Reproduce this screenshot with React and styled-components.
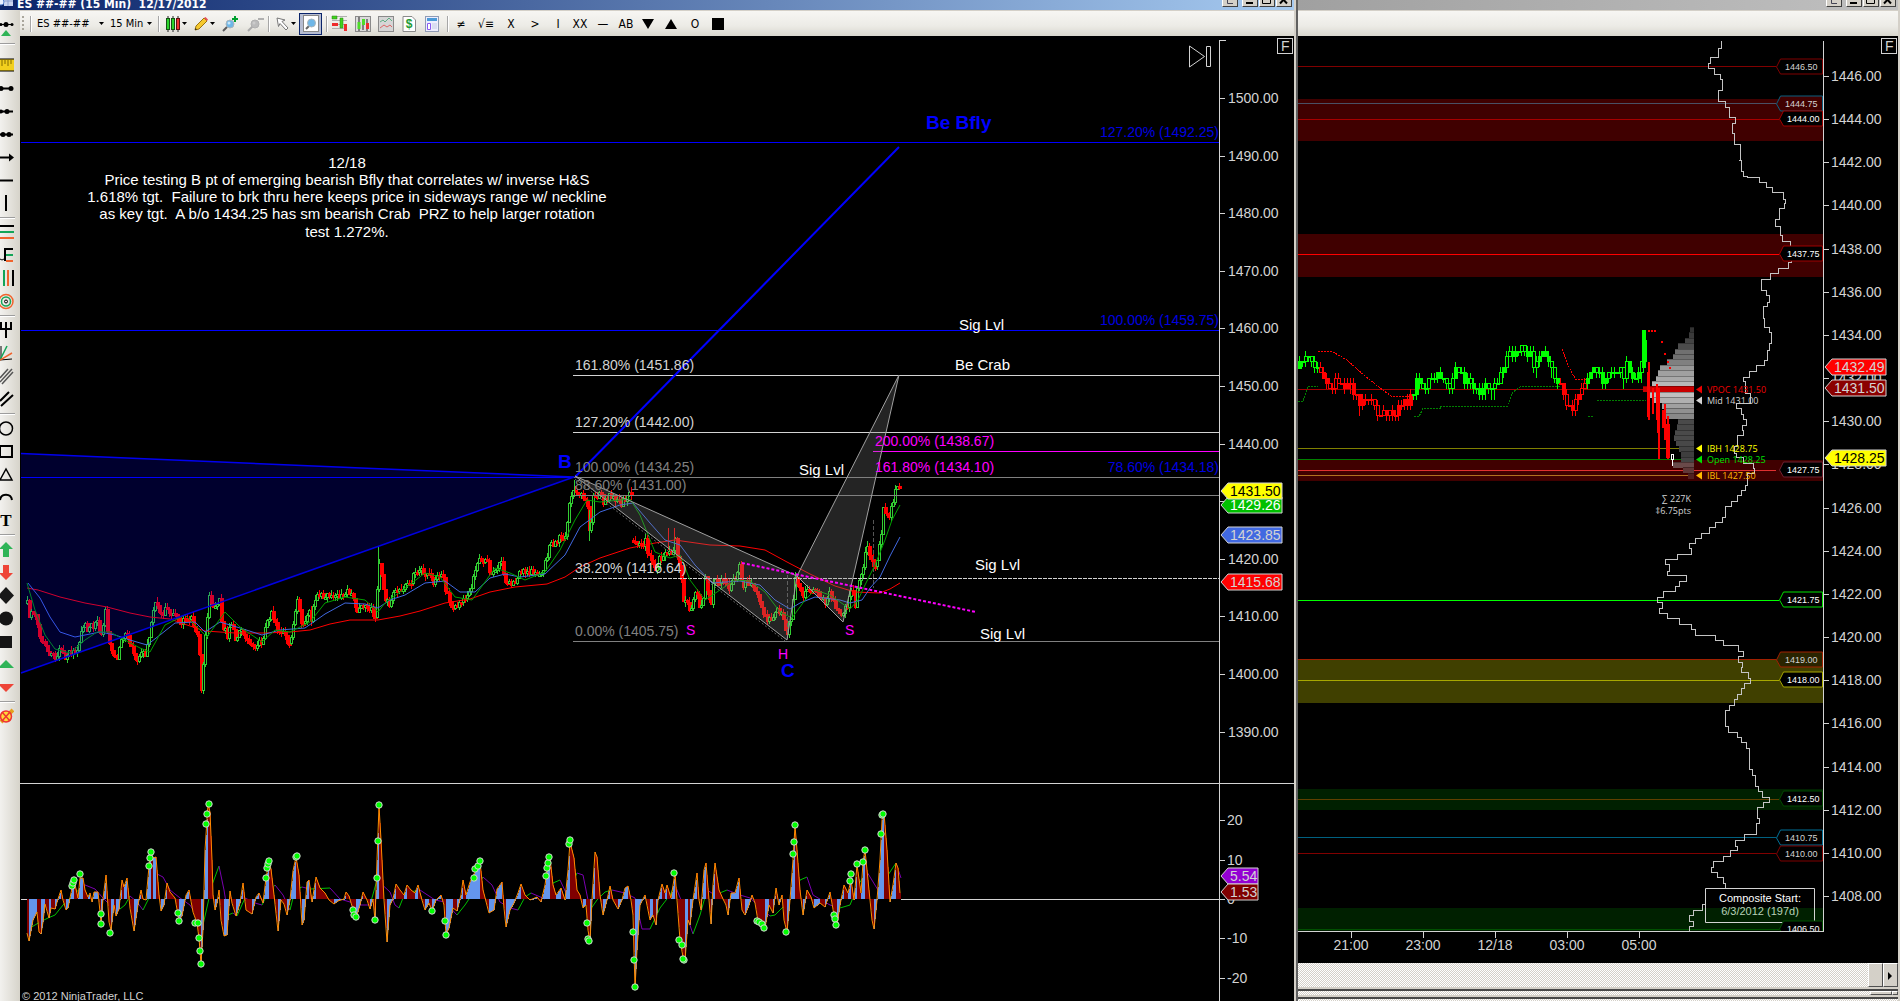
import React from "react";
import styled, { createGlobalStyle } from "styled-components";

const GlobalStyle = createGlobalStyle`
  * { box-sizing: border-box; }
  body { margin: 0; background: #000; overflow-x: hidden; }
  button, select { font: inherit; color: inherit; }
`;

const Desktop = styled.div`
  display: grid;
  grid-template-columns: minmax(0, 1294fr) minmax(0, 606fr);
  min-height: 100vh;
  background: #000;
  font-family: "Liberation Sans", Arial, sans-serif;
`;
const Window = styled.section`
  display: flex;
  flex-direction: column;
  min-width: 0;
`;
const SideWindow = styled(Window)`
  border-left: 2px solid #d4d0c8;
  border-right: 2px solid #d4d0c8;
`;
const SideInner = styled.div`
  border-left: 2px solid #606060;
`;
const TitleBar = styled.header`
  display: flex;
  align-items: flex-end;
  height: 10px;
  overflow: hidden;
  background: ${(p) =>
    p.$active
      ? "linear-gradient(90deg, #0a246a, #a6caf0)"
      : "linear-gradient(90deg, #a0a0a0, #c0c0c0)"};
`;
const TitleIcon = styled.svg`
  width: 13px;
  height: 14px;
  margin-bottom: 3px;
  flex: none;
`;
const Title = styled.h1`
  flex: 1;
  margin: 0 0 0 4px;
  color: #fff;
  font: bold 12px/12px "DejaVu Sans Condensed", "DejaVu Sans", sans-serif;
  white-space: pre;
`;
const WindowButtons = styled.div`
  display: flex;
  gap: 1px;
  margin: 0 2px 3px 0;
`;
const WindowButton = styled.button`
  display: grid;
  place-items: center;
  width: 16px;
  height: 14px;
  padding: 0;
  margin-right: ${(p) => (p.$gap ? 3 : 0)}px;
  border: 1px solid;
  border-color: #fff #404040 #404040 #fff;
  background: #d4d0c8;
`;
const Toolbar = styled.div`
  display: flex;
  align-items: center;
  height: 26px;
  border-top: 1px solid #d4d0c8;
  background: linear-gradient(#f7f6f3, #ecebe6 60%, #d9d7ce);
  color: #000;
  font: 12px "DejaVu Sans Condensed", "DejaVu Sans", sans-serif;
`;
const ToolButton = styled.button`
  display: flex;
  align-items: center;
  justify-content: center;
  flex: none;
  width: ${(p) => p.$w || 23}px;
  height: 22px;
  padding: 0;
  border: ${(p) => (p.$on ? "1px solid #0a246a" : "0")};
  background: ${(p) => (p.$on ? "#b6bdd2" : "none")};
  svg { display: block; flex: none; }
`;
const Grip = styled.span`
  flex: none;
  width: 2px;
  height: 16px;
  margin: 0 6px 0 2px;
  background: repeating-linear-gradient(#a9a69c 0 2px, transparent 2px 4px);
`;
const Rule = styled.span`
  flex: none;
  width: 2px;
  height: 16px;
  margin-left: ${(p) => p.$before || 0}px;
  margin-right: ${(p) => p.$after || 0}px;
  border-left: 1px solid #a6a6a6;
  border-right: 1px solid #fff;
`;
const Picker = styled.label`
  display: flex;
  align-items: center;
  width: ${(p) => p.$w}px;
  font-size: 11px;
  select {
    width: ${(p) => p.$w - 12}px;
    padding: 0;
    border: 0;
    background: none;
    appearance: none;
  }
`;
const Work = styled.div`
  display: grid;
  grid-template-columns: 20px minmax(0, 1fr);
`;
const Palette = styled.nav`
  display: flex;
  flex-direction: column;
  padding-top: 8px;
  background: linear-gradient(90deg, #f2f1ee, #d6d3ca);
`;
const PaletteButton = styled.button`
  height: 23px;
  padding: 0;
  border: 0;
  background: none;
  flex: none;
  svg { display: block; }
`;
const PaletteRule = styled.div`
  flex: none;
  width: 15px;
  height: 2px;
  margin: 2px 0 ${(p) => (p.$wide ? 9 : 2)}px;
  border-top: 1px solid #9d9d9d;
  border-bottom: 1px solid #fff;
`;
const Chart = styled.svg`
  display: block;
  width: 100%;
  height: auto;
  background: #000;
  text { white-space: pre; }
`;
const hatch = "repeating-conic-gradient(#fff 0 25%, #d4d0c8 0 50%) 0 0 / 2px 2px";
const ScrollBar = styled.div`
  display: flex;
  justify-content: flex-end;
  height: ${(p) => p.$h}px;
  background: ${hatch};
  border-bottom: ${(p) => (p.$last ? 0 : 2)}px solid #d4d0c8;
`;
const ScrollPiece = styled.button`
  width: ${(p) => p.$w || 15}px;
  padding: 0;
  border: 1px solid;
  border-color: #fff #505050 #505050 #fff;
  background: #d4d0c8;
`;
const Edge = styled.div`
  height: 2px;
  background: #484848;
`;

const caret = (
  <svg width="7" height="4" viewBox="0 0 7 4" aria-hidden="true">
    <path d="M1 0h5l-2.5 3z" fill="#000" />
  </svg>
);

function Lens({ extra, dull }) {
  return (
    <svg width="18" height="18" viewBox="0 0 18 18">
      <path d="M2 16l5-5" stroke={dull ? "#aaa" : "#5b5b5b"} strokeWidth="2" />
      <circle cx="9" cy="9" r="4" fill={dull ? "#bbb" : "#6fb7e8"} stroke={dull ? "#b0b0b0" : "#a8b4bc"} />
      <circle cx="8" cy="8" r="1.5" fill={dull ? "#ccc" : "#c5e6fa"} />
      {extra === "+" && <path d="M14 1v6M11 4h6" stroke="#00a030" strokeWidth="2" />}
      {extra === "-" && <path d="M12 4h6" stroke="#b0b0b0" strokeWidth="2" />}
    </svg>
  );
}

const candlesIcon = (
  <svg width="16" height="18" viewBox="0 0 16 18">
    <path d="M3 1v16M8 1v16M13 1v16" stroke="#222" />
    <rect x="1.5" y="3.5" width="3" height="11" fill="#2bd52b" stroke="#145214" />
    <rect x="6.5" y="3.5" width="3" height="11" fill="#2bd52b" stroke="#145214" />
    <rect x="11.5" y="3.5" width="3" height="11" fill="#f03030" stroke="#601010" />
  </svg>
);
const pencilIcon = (
  <svg width="16" height="16" viewBox="0 0 16 16">
    <path d="M2 14l1-4 8-8 3 3-8 8z" fill="#f6c92e" stroke="#9a7411" />
    <path d="M11 2l1.5-1 2.5 2.5-1 1.5z" fill="#e8505a" />
    <path d="M2 14l.5-2 1.5 1.5z" fill="#222" />
  </svg>
);
const arrowIcon = (
  <svg width="14" height="16" viewBox="0 0 14 16">
    <path d="M1 2l8 2-3 1.500 6 6.500-2 2-6-6.500-1.500 3z" fill="#fff" stroke="#777" />
  </svg>
);
const depthIcon = (
  <svg width="17" height="17" viewBox="0 0 17 17">
    <path d="M1 1.5h15M1 5.5h15M1 9.5h15M1 13.5h15" stroke="#b0b0b0" />
    <path d="M1 1h5v3H1zM9 3h3v10H9z" fill="#3fd21e" stroke="#2a7d17" strokeWidth=".5" />
    <path d="M1 8h6v3H1zM13 9h3v7h-3z" fill="#ee2b2b" />
  </svg>
);
const boxedCandles = (
  <svg width="16" height="16" viewBox="0 0 16 16">
    <rect x=".5" y=".5" width="15" height="15" fill="#dcdcdc" stroke="#8a8a8a" />
    <path d="M4 1v14M8 3v11M12 3v12" stroke="#222" />
    <path d="M2.5 6h3v7h-3zM7 3h3v6H7z" fill="#4ddc28" />
    <path d="M11 7h3v6h-3z" fill="#ee2b2b" />
  </svg>
);
const lineIcon = (
  <svg width="16" height="16" viewBox="0 0 16 16">
    <rect x=".5" y=".5" width="15" height="15" fill="#d6d6d6" stroke="#8a8a8a" />
    <path d="M2 6l3-2 2 2 4-4 3 3" fill="none" stroke="#5fae84" />
    <path d="M2 12l4-3 3 2 3-2 2 2" fill="none" stroke="#d66" />
  </svg>
);
const dollarIcon = (
  <svg width="14" height="16" viewBox="0 0 14 16">
    <path d="M1 .5h9l3.5 3.5v11.5H1z" fill="#fff" stroke="#8a8a8a" />
    <text x="7" y="12" textAnchor="middle" fontSize="12" fontWeight="bold" fill="#1d9a33" fontFamily="Liberation Sans">$</text>
  </svg>
);
const panelIcon = (
  <svg width="14" height="16" viewBox="0 0 14 16">
    <rect x=".5" y=".5" width="13" height="15" fill="#eef" stroke="#8f9bb5" />
    <path d="M2 2h10v3H2z" fill="#4b9ad8" />
    <path d="M2.5 7.5h3v6h-3z" fill="#fff" stroke="#8a5cf0" />
    <path d="M7 8h5M7 10h5M7 12h5" stroke="#c4cbe4" />
  </svg>
);

const K = { stroke: "#000", fill: "none", strokeWidth: 2 };
const palette = [
  ["Snap", <g key="a"><path d="M0 6.5h13" {...K} strokeWidth="1" /><circle cx="6" cy="6.5" r="2.5" /><circle cx="12" cy="6.5" r="1.5" /><circle cx="1" cy="6.5" r="1.5" /><path d="M6 12l5 6H1z" fill="#2fb457" /></g>, "wide"],
  ["Ruler", <g key="a"><rect y="5" width="14" height="12" fill="#f2cf1d" /><path d="M0 5h14M0 17h14" {...K} strokeWidth="1" /><path d="M2 6v6M5 6v4M8 6v6M11 6v4" stroke="#806a00" /></g>],
  ["Line", <g key="a"><path d="M0 11.5h12" {...K} /><circle cx="11" cy="11.5" r="2.5" /><circle cx="1" cy="11.5" r="2.5" /></g>],
  ["Ray", <g key="a"><path d="M0 11.5h13" {...K} /><circle cx="7" cy="11.5" r="2.5" /><circle cx="1" cy="11.5" r="2" /></g>],
  ["Extended line", <g key="a"><path d="M0 11.5h13" {...K} /><circle cx="3" cy="11.5" r="2.5" /><circle cx="9" cy="11.5" r="2.5" /></g>],
  ["Arrow line", <g key="a"><path d="M0 11.5h12" {...K} /><path d="M9 7.5l5 4-5 4z" /></g>],
  ["Horizontal line", <path key="a" d="M0 11.5h13" {...K} />],
  ["Vertical line", <path key="a" d="M6 3v16" {...K} />, "rule"],
  ["Retracements", <g key="a" strokeWidth="2"><path d="M0 5h14" stroke="#000" /><path d="M0 11h14" stroke="#14a558" /><path d="M0 17h14" stroke="#f0642d" /></g>],
  ["Extensions", <g key="a" strokeWidth="2" fill="none"><path d="M13 5H5v12" stroke="#000" /><path d="M0 15l2 1 2-1" stroke="#000" strokeWidth="1" /><path d="M6 11h7" stroke="#14a558" /><path d="M6 17h7" stroke="#f0642d" /></g>],
  ["Time extensions", <g key="a" strokeWidth="2"><path d="M4 3v16" stroke="#14a558" /><path d="M8 3v16" stroke="#f0642d" /><path d="M13 3v16" stroke="#000" /></g>],
  ["Circle ratios", <g key="a" fill="none"><circle cx="6" cy="11.5" r="7" stroke="#f0642d" strokeWidth="1.5" /><circle cx="6" cy="11.5" r="4.5" stroke="#14a558" strokeWidth="1.5" /><circle cx="6" cy="11.5" r="1.5" stroke="#000" /></g>, "rule"],
  ["Pitchfork", <path key="a" d="M1 3v7h10V3M6 3v16" {...K} />],
  ["Gann fan", <g key="a" fill="none"><path d="M0 18l12-1M1 4v14" stroke="#000" /><path d="M0 18L7 4" stroke="#14a558" strokeWidth="1.5" /><path d="M0 18l12-7" stroke="#f0642d" strokeWidth="1.5" /></g>],
  ["Regression channel", <path key="a" d="M0 13L8 4M0 17L12 4M2 19L13 7" stroke="#555" strokeWidth="1.5" fill="none" />],
  ["Trend channel", <path key="a" d="M0 13L9 4M1 18L13 7" {...K} />, "rule"],
  ["Ellipse", <circle key="a" cx="6" cy="11.5" r="6.5" {...K} strokeWidth="1.5" />],
  ["Rectangle", <rect key="a" x="0" y="6" width="12" height="11" {...K} />],
  ["Triangle", <path key="a" d="M6 6l6 11H0z" {...K} strokeWidth="1.5" />],
  ["Arc", <path key="a" d="M0 14c1-7 11-7 12 0" {...K} />],
  ["Text", <text key="a" x="6" y="17" textAnchor="middle" fontFamily="Liberation Serif" fontWeight="bold" fontSize="17">T</text>, "rule"],
  ["Arrow up", <path key="a" d="M6 4l7 7h-4v8H3v-8h-4z" fill="#2fb457" />],
  ["Arrow down", <path key="a" d="M6 19l7-7h-4V4H3v8h-4z" fill="#ee4437" />],
  ["Diamond", <path key="a" d="M6 3l8 8.5-8 8.5-8-8.5z" fill="#181818" />],
  ["Dot", <circle key="a" cx="6" cy="11.5" r="7" fill="#151515" />],
  ["Square", <rect key="a" x="-1" y="6" width="13" height="12" fill="#151515" />],
  ["Triangle up", <path key="a" d="M6 7l8 8H-2z" fill="#2fb457" />],
  ["Triangle down", <path key="a" d="M6 16l8-8H-2z" fill="#ee4437" />, "rule"],
  ["Remove drawings", <g key="a"><path d="M1 17L13 5" stroke="#e4a11b" strokeWidth="4" /><circle cx="6" cy="11.5" r="5.5" fill="#ffd93a" stroke="#e33" strokeWidth="1.5" /><path d="M2 7l8 9M10 7l-8 9" stroke="#e33" strokeWidth="1.5" /></g>],
];

// turns "x,y x,y ..." into pairs
const pts = (s) => s.trim().split(/\s+/).map((p) => p.split(",").map(Number));

const price = pts(`27,603 28,620 32,610 35,617 38,633 43,642 49,652 55,656 60,646 66,657 73,650 77,647 82,628 90,626 97,623 101,637 105,610 108,637
111,653 117,658 121,643 126,631 129,643 135,660 145,653 149,633 155,603 160,618 167,608 175,613 180,623 186,618 192,620 196,630 198,643 201,686 204,650
207,617 209,593 212,610 219,597 222,627 227,635 231,623 236,640 242,628 247,640 253,647 261,643 267,623 271,615 276,620 278,637 282,628 288,645 292,630
297,603 303,627 308,610 311,618 315,598 325,593 335,597 347,593 353,600 358,612 363,602 369,607 373,613 376,623 378,561 382,573 384,597 389,607 394,593
402,588 410,580 418,568 427,573 433,580 443,577 446,593 451,603 457,610 463,597 469,593 473,580 478,557 486,562 492,575 500,560 504,578 514,585 520,573
533,572 541,577 547,553 551,540 555,545 561,535 565,540 568,510 571,497 574,487 577,497 583,495 587,510 589,530 592,513 593,493 600,497 605,502 610,493
615,502 622,503 628,493 632,501`);
const price2 = pts(`633,540 638,548 645,542 648,557 655,567 662,555 668,552 672,558 674,537 677,553 680,573 683,597 687,603 691,612 696,587 698,610 702,607
705,580 708,597 711,608 713,583 722,580 728,588 733,582 739,567 742,583 753,585 758,597 763,617 768,617 772,623 776,610 782,613 786,633 788,627 792,613
794,580 798,583 803,593 807,587 815,592 823,597 826,602 829,593 835,607 840,617 845,607 848,603 852,583 855,603 858,580 862,577 865,550 868,548 872,563
874,573 878,557 881,530 883,510 888,513 892,510 895,490 897,488 900,492`);

const redMa = `27,588 38,590 60,597 85,603 107,607 130,613 150,617 170,619 190,626 205,631 235,633 265,633 290,632 310,630 330,624 350,620 378,620 400,616
420,611 445,603 470,599 490,592 515,587 547,584 565,577 580,567 600,558 630,548 655,543 675,540 710,545 740,546 765,550 787,562 810,574 835,586 855,592
880,593 890,589 900,583`;
const blueMa = `28,583 40,598 50,617 60,632 75,637 100,632 115,635 130,640 147,645 160,635 175,623 195,622 205,632 220,622 240,628 262,635 280,630 305,628
325,614 345,603 365,604 378,608 390,600 405,595 425,583 445,581 460,592 475,592 490,578 505,574 520,577 545,574 565,555 580,527 600,512 620,505 633,503
650,523 665,540 680,545 695,565 712,583 740,581 760,585 775,600 790,609 800,603 815,597 840,600 850,603 862,600 870,588 880,577 890,556 900,537`;
const greenMa = `27,583 35,610 45,635 55,649 70,653 85,640 97,632 110,632 125,640 140,648 150,652 165,625 185,615 200,630 207,637 225,612 240,627 262,642
275,630 290,632 310,622 325,603 345,597 365,600 378,612 385,603 400,592 425,573 440,577 455,597 472,600 495,568 510,573 525,580 545,572 560,550 575,520
587,500 600,502 630,499 640,515 655,552 670,558 680,555 690,580 705,600 720,590 735,580 750,581 765,592 780,612 792,618 805,600 815,590 830,595 850,609
858,600 865,585 875,565 885,540 892,520 900,505`;

const osc = pts(`27,933 29,941 33,920 37,912 39,932 41,934 43,922 45,904 49,918 51,908 55,909 58,899 61,890 63,900 66,910 68,908 71,893 74,880 76,889 78,898
80,878 83,878 85,890 88,897 90,893 92,902 94,892 98,892 101,922 103,899 106,875 109,922 111,930 114,905 116,916 119,909 122,880 124,887 127,878 130,908
134,931 138,905 141,890 143,899 146,900 149,866 151,852 153,858 156,857 159,895 161,911 164,905 167,883 170,892 175,898 178,915 179,920 182,916 186,895
189,890 193,912 197,923 199,938 201,964 203,930 205,850 208,804 210,812 212,860 213,895 215,910 217,903 219,890 221,920 224,936 227,935 230,891 232,903
236,916 240,903 243,883 246,910 252,914 256,897 259,893 263,903 266,878 269,862 271,869 274,895 278,931 281,900 284,904 287,915 290,900 293,871 296,857
299,875 302,925 304,920 307,882 309,880 312,902 316,877 320,888 325,893 329,900 334,904 338,901 344,899 346,892 349,896 352,906 356,918 360,905 363,892
367,900 370,909 373,899 375,920 377,860 379,806 381,840 384,900 387,942 390,905 393,899 396,884 400,890 404,895 407,885 411,890 415,893 418,885 422,900
425,910 429,903 432,911 436,900 441,895 444,905 446,935 449,928 453,908 457,911 461,895 463,880 466,895 470,882 475,872 478,865 480,862 483,890 489,913
494,910 497,889 502,882 504,908 506,927 510,910 514,903 518,893 521,884 525,895 530,900 537,897 541,902 545,885 547,870 550,858 553,885 556,895 561,888
565,900 568,870 570,842 574,858 577,890 580,895 583,908 586,905 588,930 590,942 592,900 595,852 597,857 600,895 603,915 607,900 610,886 613,900 618,909
622,900 625,888 628,886 631,900 633,915 635,988 637,950 640,905 645,895 648,910 650,920 653,915 656,925 658,900 662,884 665,893 667,885 671,898 675,873
677,900 680,940 683,957 685,961 688,920 690,925 693,900 697,873 699,900 701,910 704,870 706,863 709,900 711,924 713,885 715,863 719,890 723,899 726,905
728,915 731,893 735,893 739,878 742,910 745,915 749,905 752,895 755,903 758,921 762,925 765,928 769,905 773,913 776,888 779,905 782,895 784,920 787,932
790,900 793,860 795,826 797,850 800,890 803,915 807,890 811,897 814,908 820,903 825,907 830,892 834,915 837,925 840,905 844,885 848,893 851,880 854,900
857,865 861,893 863,862 865,850 868,880 872,920 874,929 877,900 880,860 882,820 884,813 887,850 890,902 893,885 896,863 898,868 900,893`);

const oscDots = pts(`72,886 73,883 74,880 80,874 101,914 101,924 110,933 149,866 150,858 151,852 178,913 179,921 195,923 198,923 199,938 200,951 201,964
206,824 207,814 209,804 266,878 267,868 268,864 269,861 296,857 297,856 353,910 354,915 356,917 375,920 377,878 378,841 379,805 432,911 445,921 446,935
474,878 475,869 478,866 480,861 546,876 547,868 548,863 549,857 569,844 570,840 587,923 588,939 589,941 633,932 634,960 635,987 674,873 679,940 682,945
684,960 683,959 757,921 759,922 762,924 764,928 786,932 793,854 794,842 795,825 834,915 835,919 836,925 850,881 851,874 857,864 863,862 865,850 881,834
882,815 883,814`);

const avg = pts(`30,928 40,922 48,918 55,915 63,905 75,893 85,885 95,889 103,898 110,905 120,909 125,905 130,896 137,902 143,910 148,900 157,874 163,877
170,890 180,898 190,905 203,925 212,885 219,866 224,890 228,915 233,913 237,916 245,898 255,903 262,905 268,893 275,885 283,895 290,910 295,890 302,887
310,889 330,888 340,899 360,905 370,905 377,880 390,892 395,905 399,908 405,893 420,890 435,900 445,902 457,915 465,905 475,890 483,877 492,885 500,902
510,908 518,910 525,897 531,893 545,899 553,883 560,880 567,895 577,873 583,875 590,910 597,900 605,892 612,890 625,893 635,898 642,929 650,929 660,908
670,895 675,885 683,905 693,934 700,915 707,890 715,895 727,890 740,895 750,898 770,916 775,915 785,905 795,895 800,880 807,877 813,895 830,905 840,908
850,905 858,885 867,872 878,890 888,875 896,863 901,878`);

// overnight session, right hand chart
const session = pts(`1299,368 1300,362 1305,360 1313,362 1317,370 1319,375 1323,378 1327,385 1333,383 1339,380 1345,388 1352,388 1356,395 1360,405 1370,403
1375,410 1378,415 1383,410 1387,415 1397,415 1401,400 1407,400 1411,397 1415,385 1420,382 1426,387 1432,378 1438,372 1446,383 1451,385 1455,370 1460,372
1463,383 1470,383 1473,390 1479,395 1483,383 1489,395 1493,385 1500,378 1505,362 1509,353 1514,355 1520,347 1527,353 1533,362 1539,352 1545,355 1551,367
1555,377 1558,383 1560,387 1564,400 1570,408 1576,400 1582,388 1586,377 1590,370 1597,368 1601,377 1607,380 1613,372 1619,372 1623,375 1625,360 1629,372
1633,383 1638,372 1642,360 1643,337 1645,340`);

// composite profile: at each y the line steps sideways to x
const steps = pts(`1721,41 1718,48 1715,57 1710,57 1708,63 1714,68 1720,74 1722,79 1718,90 1725,101 1729,107 1735,117 1732,123 1734,133 1737,144 1740,144
1738,160 1741,160 1743,171 1747,176 1759,177 1766,182 1772,187 1783,192 1785,199 1784,203 1779,208 1775,219 1780,226 1782,235 1784,241 1790,241 1791,250
1788,262 1778,268 1770,273 1761,279 1766,290 1769,295 1767,302 1763,306 1764,318 1769,327 1771,332 1769,343 1767,350 1764,360 1756,365 1749,371 1743,377
1745,381 1750,393 1736,403 1741,408 1743,414 1746,419 1742,425 1743,430 1737,435 1734,446 1736,453 1743,457 1753,463 1754,468 1747,473 1745,485 1741,490
1737,495 1731,501 1725,506 1722,517 1715,522 1709,527 1701,533 1695,538 1689,543 1691,548 1677,554 1665,559 1669,564 1667,571 1686,575 1679,581 1675,586
1663,591 1657,597 1662,602 1659,608 1667,613 1679,618 1691,624 1695,629 1715,635 1723,640 1738,645 1743,651 1738,656 1742,662 1741,667 1748,672 1750,678
1744,683 1741,688 1737,694 1734,699 1729,705 1725,710 1728,726 1737,732 1741,737 1746,742 1749,748 1752,769 1755,775 1758,786 1762,791 1769,797 1763,802
1757,807 1759,818 1756,823 1744,834 1735,840 1737,846 1730,850 1723,856 1713,861 1711,867 1717,872 1723,877 1725,883 1725,904 1702,904 1693,910 1689,915
1693,921 1689,926 1689,931`);

const valueAt = (list, x) => {
  let i = 0;
  while (i < list.length - 2 && list[i + 1][0] < x) i++;
  const [x0, y0] = list[i];
  const [x1, y1] = list[i + 1];
  return y0 + ((y1 - y0) * (x - x0)) / (x1 - x0 || 1);
};
const noise = (n) => {
  const v = Math.sin(n * 127.1) * 43758.5453;
  return v - Math.floor(v);
};

function Candles({ data }) {
  const out = [];
  const end = data[data.length - 1][0];
  let prev = data[0][1];
  for (let x = data[0][0]; x <= end; x += 2) {
    const close = Math.round(valueAt(data, x) + (noise(x) - 0.5) * 9);
    const top = Math.min(prev, close);
    const h = Math.max(2, Math.abs(close - prev));
    const hi = top - Math.round(noise(x + 3) * 5);
    const lo = top + h + Math.round(noise(x + 7) * 5);
    const up = close < prev;
    out.push(
      <g key={x}>
        <path d={`M${x + 0.5} ${hi}V${lo}`} stroke={up ? "#32cd32" : "#f00"} />
        {up ? (
          <rect x={x - 0.5} y={top + 0.5} width="2" height={h} fill="#000" stroke="#32cd32" />
        ) : (
          <rect x={x - 1} y={top} width="4" height={h + 1} fill="#f00" />
        )}
      </g>
    );
    prev = close;
  }
  return <g>{out}</g>;
}

function SessionBars() {
  const out = [];
  const snap = (v) => Math.round(v / 5.4) * 5.4;
  const isRed = (x) => (x > 1317 && x < 1413) || (x > 1559 && x < 1585);
  let prev = 368;
  for (let x = 1299; x < 1646; x += 3) {
    const close = snap(valueAt(session, x) + (noise(x) - 0.5) * 10);
    const top = Math.min(prev, close);
    const h = Math.abs(close - prev);
    const c = isRed(x) ? "#f00" : "#0f0";
    const solid = noise(x + 11) > 0.5;
    out.push(
      <g key={x} stroke={c} fill={solid ? c : "#000"}>
        <path d={`M${x + 0.5} ${top - snap(noise(x + 1) * 8)}V${top + h + snap(noise(x + 2) * 9)}`} />
        <rect x={x - 0.5} y={top} width="3" height={Math.max(h, 1)} />
      </g>
    );
    prev = close;
  }
  return <g>{out}</g>;
}

function Histogram() {
  const out = [];
  for (let x = 27; x < 901; x++) {
    const y = valueAt(osc, x);
    const rising = valueAt(osc, x + 1) <= y;
    out.push(
      <rect key={x} x={x} y={Math.min(y, 899)} width="1" height={Math.max(1, Math.abs(y - 899))} fill={rising ? "#6495ed" : "#800000"} />
    );
  }
  return <g>{out}</g>;
}

function PriceTag({ x, y, w = 54, fill, color = "#d3d3d3", children }) {
  return (
    <g>
      <path d={`M${x} ${y}l7-8h${w}v16h-${w}z`} fill={fill} stroke="#d3d3d3" />
      <text x={x + 9} y={y + 5} fill={color}>{children}</text>
    </g>
  );
}

function LevelTag({ y, stroke, dim, over = "#000", children }) {
  const tip = dim ? 1776 : 1779;
  return (
    <g fontSize="9">
      <path d={`M${tip}.5 ${y}l4-8H1822.5v15H${tip + 4}.5z`} fill={over} stroke={stroke} />
      <text x={dim ? 1785 : 1787} y={y + 3} fill={dim ? "#d3d3d3" : "#fff"}>{children}</text>
    </g>
  );
}

const fibs = [
  [375, "#d3d3d3", "161.80% (1451.86)"],
  [432, "#d3d3d3", "127.20% (1442.00)"],
  [477, "#808080", "100.00% (1434.25)"],
  [495, "#808080", "88.60% (1431.00)"],
  [578, "#d3d3d3", "38.20% (1416.64)"],
  [641, "#808080", "0.00% (1405.75)"],
];
const note = [
  [168, "12/18"],
  [185, "Price testing B pt of emerging bearish Bfly that correlates w/ inverse H&S"],
  [202, "1.618% tgt.  Failure to brk thru here keeps price in sideways range w/ neckline"],
  [219, "as key tgt.  A b/o 1434.25 has sm bearish Crab  PRZ to help larger rotation"],
  [237, "test 1.272%."],
];
const mainPrices = [1500, 1490, 1480, 1470, 1460, 1450, 1440, 1430, 1420, 1410, 1400, 1390];

function MainChart() {
  return (
    <Chart viewBox="20 36 1274 965" fontSize="14" role="img" aria-label="ES 15 minute chart">
      <g shapeRendering="crispEdges" strokeWidth="1">
        <path d="M21 142.5H1219M21 330.5H1219M21 477.5H573" stroke="#00f" />
        <Candles data={price} />
        <Candles data={price2} />
        <path d="M378.5 547V600M589.5 510V541M574.5 480V495" stroke="#32cd32" />
        <path d="M201.5 655V693M668.5 528V550M674.5 528V540" stroke="#f00" />
        {fibs.map(([y, c]) => (
          <path key={y} d={`M573 ${y}.5H1219`} stroke={c} strokeDasharray={y === 578 ? "4 1" : undefined} />
        ))}
        <path d="M873 451.5H1219" stroke="#f0f" />
        <path d="M787.5 575V640M873.5 520V588" stroke="#555" strokeDasharray="4 2" />
      </g>
      <g fill="none">
        <polyline points={redMa} stroke="#ff0000" />
        <polyline points={blueMa} stroke="#4169e1" />
        <polyline points={greenMa} stroke="#00a000" />
      </g>
      <path d="M21 453.5L574 477 21 673z" fill="#00f" fillOpacity=".18" />
      <path d="M21 453.5L574 477" stroke="#0000f0" strokeWidth="1.5" />
      <path d="M574 477L21 673" stroke="#0000e0" strokeWidth="1.5" />
      <path d="M575 477L899 147" stroke="#00f" strokeWidth="2" />
      <g fill="#808080" fillOpacity=".28" stroke="#a0a0a0">
        <path d="M575 476L797 576 787 640z" />
        <path d="M797 576L899 375 843 622z" />
      </g>
      <path d="M575 479L785 641" stroke="#666" strokeDasharray="2 2" />
      <path d="M742 563L976 612" stroke="#f0f" strokeWidth="2" strokeDasharray="3 2" />

      {fibs.map(([y, c, t]) => (
        <text key={y} x="575" y={y - 5} fill={c}>{t}</text>
      ))}
      <g fill="#f0f">
        <text x="875" y="446">200.00% (1438.67)</text>
        <text x="875" y="472">161.80% (1434.10)</text>
        <text x="686" y="635">S</text>
        <text x="845" y="635">S</text>
        <text x="778" y="659">H</text>
      </g>
      <g fill="#0000e0" textAnchor="end">
        <text x="1219" y="137">127.20% (1492.25)</text>
        <text x="1219" y="325">100.00% (1459.75)</text>
        <text x="1219" y="472">78.60% (1434.18)</text>
      </g>
      <g fill="#00f" fontWeight="bold" fontSize="19">
        <text x="558" y="468">B</text>
        <text x="781" y="677">C</text>
        <text x="926" y="129">Be Bfly</text>
      </g>
      <g fill="#fff" fontSize="15">
        <text x="959" y="330">Sig Lvl</text>
        <text x="955" y="370">Be Crab</text>
        <text x="799" y="475">Sig Lvl</text>
        <text x="975" y="570">Sig Lvl</text>
        <text x="980" y="639">Sig Lvl</text>
        {note.map(([y, t]) => (
          <text key={y} x="347" y={y} textAnchor="middle">{t}</text>
        ))}
      </g>

      <path d="M1189.5 46v21l15-10.5zM1206.5 46.5h4v20h-4z" fill="none" stroke="#d3d3d3" />
      <g shapeRendering="crispEdges" stroke="#d3d3d3" fill="none">
        <path d="M1226 40.5H1219.5V1001M20 783.5H1294M21 899.5H27M901 899.5H1225" />
        {mainPrices.map((p) => (
          <path key={p} d={`M1219 ${Math.round(98 + (1500 - p) * 5.76)}.5h6`} />
        ))}
        {[20, 10, -10, -20].map((v) => (
          <path key={v} d={`M1219 ${Math.round(899 - v * 3.94)}.5h6`} />
        ))}
        <rect x="1277.5" y="38.5" width="15" height="15" />
      </g>
      <g fill="#d3d3d3">
        <text x="1281" y="51">F</text>
        {mainPrices.map((p) => (
          <text key={p} x="1228" y={Math.round(103 + (1500 - p) * 5.76)}>{p}.00</text>
        ))}
        {[20, 10, 0, -10, -20].map((v) => (
          <text key={v} x="1227" y={Math.round(904 - v * 3.94)}>{v}</text>
        ))}
        <text x="22" y="1000" fontSize="11">© 2012 NinjaTrader, LLC</text>
      </g>
      <PriceTag x={1221} y={505} fill="#00c000" color="#fff">1429.26</PriceTag>
      <PriceTag x={1221} y={491} fill="#ff0" color="#000">1431.50</PriceTag>
      <PriceTag x={1221} y={535} fill="#4169e1">1423.85</PriceTag>
      <PriceTag x={1221} y={582} fill="#f00">1415.68</PriceTag>
      <PriceTag x={1221} y={876} w={30} fill="#9400d3">5.54</PriceTag>
      <PriceTag x={1221} y={892} w={30} fill="#800000">1.53</PriceTag>

      {avg.slice(1).map(([x, y], i) => (
        <path key={x} d={`M${avg[i][0]} ${avg[i][1]}L${x} ${y}`} stroke={y < avg[i][1] ? "#00c000" : "#7a00b0"} />
      ))}
      <g shapeRendering="crispEdges">
        <Histogram />
      </g>
      <polyline points={osc.map((p) => p.join()).join(" ")} fill="none" stroke="#ff8c00" />
      <g fill="#0f0" stroke="#d3d3d3">
        {oscDots.map(([x, y], i) => (
          <circle key={i} cx={x} cy={y} r="3.2" />
        ))}
      </g>
    </Chart>
  );
}

const volume = [
  [1690, "#333"], [1689, "#3a3a3a"], [1685, "#444"], [1678, "#4c4c4c"], [1675, "#707070"], [1673, "#707070"], [1667, "#808080"], [1660, "#989898"],
  [1658, "#a0a0a0"], [1656, "#a8a8a8"], [1652, "#b8b8b8"], [1643, "#c80000"], [1650, "#c0c0c0"], [1652, "#b0b0b0"], [1662, "#a0a0a0"], [1664, "#909090"],
  [1666, "#888"], [1678, "#4a4a4a"], [1677, "#484848"], [1675, "#4a4a4a"], [1674, "#4a4a4a"], [1676, "#484848"], [1679, "#444"], [1681, "#3e3e3e"],
  [1681, "#444"], [1673, "#6a4a4a"], [1683, "#603838"], [1688, "#502020"],
];
const levelLines = [
  [66, "#800000", 1776], [103, "#4a5064", 1776], [119, "#a80000", 1779], [254, "#f00", 1779], [389, "#a00000", 1652], [448, "#808000", 1681],
  [459, "#008000", 1681], [470, "#e03030", 1776], [475, "#b07020", 1693], [600, "#0f0", 1779], [659, "#a02000", 1776], [680, "#a8a800", 1779],
  [799, "#604000", 1779], [837, "#006080", 1776], [853, "#800000", 1776], [929, "#005000", 1779],
];
const markers = [
  [389, "#f00000", "VPOC 1431.50"],
  [400, "#d3d3d3", "Mid 1431.00"],
  [448, "#ff0", "IBH 1428.75"],
  [459, "#00e000", "Open 1428.25"],
  [475, "#ffb800", "IBL 1427.50"],
];
const sidePrices = Array.from({ length: 20 }, (_, i) => 1446 - i * 2);

function ProfileChart() {
  const path = steps.map(([x, y], i) => (i ? `V${y}.5H${x}.5` : `M${x}.5 ${y}`)).join("");
  return (
    <Chart viewBox="1298 36 600 927" fontSize="14" role="img" aria-label="Composite volume profile chart">
      <g shapeRendering="crispEdges">
        <path d="M1298 99h525v42h-525zM1298 234h525v43h-525zM1298 460h525v21h-525z" fill="#400000" />
        <path d="M1298 659h525v44h-525z" fill="#404000" />
        <path d="M1298 789h525v21h-525zM1298 908h525v23h-525z" fill="#002000" />
        {levelLines.map(([y, c, x]) => (
          <path key={y} d={`M1298 ${y}.5H${x}`} stroke={c} />
        ))}
        {volume.map(([x, c], i) => {
          const y = Math.round(327 + i * 5.4);
          return (
            <g key={i}>
              <rect x={x} y={y} width={1694 - x} height="6" fill={c} />
              <rect x={x} y={y} width={1694 - x} height="1" fill="#000" fillOpacity=".3" />
            </g>
          );
        })}
        <g fill="none" strokeWidth="1" strokeDasharray="2 1">
          <path d="M1318 351.5H1332L1347 360 1365 376 1380 388 1392 396.5H1410M1562 349L1568 365 1573 375 1576 379.5H1587" stroke="#f00" />
          <path d="M1648 330.5H1656M1661 342h2M1664 354h2M1667 362h2M1669 368h2" stroke="#f00" strokeWidth="2" />
          <path d="M1298 401.5H1303L1308 386.5H1318M1414 416.5H1419L1423 408.5H1440V406.5H1507L1513 392 1521 386.5H1560M1588 416.5H1593M1597 400.5H1646" stroke="#008000" />
        </g>
        <SessionBars />
        <path d="M1644 330v38" stroke="#0f0" strokeWidth="4" />
        <path d="M1648.5 362V420M1656.5 384V420M1658.5 390V459M1667.5 416V459M1664.5 404V440" stroke="#f00" strokeWidth="2" />
        <path d="M1647 372h3v45h-3zM1652 388h2v26h-2zM1657 388h3v45h-3zM1662 410h3v18h-3zM1666 424h4v34h-4z" fill="#f00" />
        <path d="M1672.5 454v12" stroke="#fff" />
        <rect x="1671.5" y="454.5" width="2" height="5" fill="#000" stroke="#fff" />
        <path d={path} fill="none" stroke="#c4c4c4" />
      </g>
      <LevelTag y={67} stroke="#800000" dim>1446.50</LevelTag>
      <LevelTag y={104} stroke="#0a6080" dim over="#400000">1444.75</LevelTag>
      <LevelTag y={119} stroke="#a00000">1444.00</LevelTag>
      <LevelTag y={254} stroke="#a00000">1437.75</LevelTag>
      <LevelTag y={470} stroke="#702030">1427.75</LevelTag>
      <LevelTag y={600} stroke="#00e000">1421.75</LevelTag>
      <LevelTag y={660} stroke="#a02000" dim over="#2a2400">1419.00</LevelTag>
      <LevelTag y={680} stroke="#a8a800">1418.00</LevelTag>
      <LevelTag y={799} stroke="#004800">1412.50</LevelTag>
      <LevelTag y={838} stroke="#007098" dim>1410.75</LevelTag>
      <LevelTag y={854} stroke="#800000" dim>1410.00</LevelTag>

      <path d="M1705.5 888.5h109v34h-109z" fill="#000" stroke="#d3d3d3" />
      <path d="M1706 908h108v14h-108z" fill="#002000" />
      <g fontSize="11" textAnchor="middle">
        <text x="1760" y="902" fill="#fff">Composite Start:</text>
        <text x="1760" y="915" fill="#b8d0b8">6/3/2012 (197d)</text>
      </g>
      <LevelTag y={929} stroke="#005000">1406.50</LevelTag>
      <rect x="1298" y="931" width="600" height="10" fill="#000" />

      <g fontFamily="Open Sans" fontSize="9">
        {markers.map(([y, c, t]) => (
          <g key={y} fill={c}>
            <path d={`M1696 ${y + 0.5}l6-4v8z`} />
            <text x="1707" y={y + 4}>{t}</text>
          </g>
        ))}
        <g fill="#d3d3d3" textAnchor="end">
          <text x="1691" y="502">∑ 227K</text>
          <text x="1691" y="514">‡6.75pts</text>
        </g>
      </g>

      <g shapeRendering="crispEdges" stroke="#d3d3d3" fill="none">
        <path d="M1823.5 41V931.5H1298" />
        {[1351, 1423, 1495, 1567, 1639].map((x) => (
          <path key={x} d={`M${x}.5 932v6`} />
        ))}
        {sidePrices.map((p) => (
          <path key={p} d={`M1824 ${Math.round(76 + (1446 - p) * 21.58)}.5h5`} />
        ))}
        <rect x="1881.5" y="38.5" width="15" height="15" />
      </g>
      <g fill="#d3d3d3">
        <text x="1885" y="51">F</text>
        {sidePrices.map((p) => (
          <text key={p} x="1831" y={Math.round(81 + (1446 - p) * 21.58)}>{p}.00</text>
        ))}
        <g textAnchor="middle">
          {["21:00", "23:00", "12/18", "03:00", "05:00"].map((t, i) => (
            <text key={t} x={1351 + i * 72} y="950">{t}</text>
          ))}
        </g>
      </g>
      <PriceTag x={1825} y={367} fill="#f00">1432.49</PriceTag>
      <PriceTag x={1825} y={388} fill="#8b0000">1431.50</PriceTag>
      <PriceTag x={1825} y={458} fill="#ff0" color="#000">1428.25</PriceTag>
    </Chart>
  );
}

function Controls() {
  return (
    <WindowButtons>
      <WindowButton $gap aria-label="Link">
        <svg width="8" height="10"><path d="M1.5 0v8.5H7" fill="none" stroke="#445" /></svg>
      </WindowButton>
      <WindowButton aria-label="Minimize">
        <svg width="10" height="10"><path d="M1 8h7" stroke="#000" strokeWidth="2" /></svg>
      </WindowButton>
      <WindowButton aria-label="Maximize">
        <svg width="10" height="10"><path d="M.5 1h8v7.5h-8z" fill="none" stroke="#000" /></svg>
      </WindowButton>
      <WindowButton aria-label="Close">
        <svg width="10" height="10"><path d="M1 1l7 7.5M8 1L1 8.5" stroke="#000" strokeWidth="2" /></svg>
      </WindowButton>
    </WindowButtons>
  );
}

const textTools = [
  ["≠", 24], ["√≡", 26], ["X", 24], [">", 24], ["I", 22], ["XX", 22], ["—", 24], ["AB", 22],
  [<svg key="d" width="12" height="10" aria-label="Down"><path d="M0 0h12L6 10z" /></svg>, 22],
  [<svg key="u" width="12" height="10" aria-label="Up"><path d="M0 10h12L6 0z" /></svg>, 24],
  ["O", 24],
  [<svg key="s" width="12" height="12" aria-label="Block"><path d="M0 0h12v12H0z" /></svg>, 22],
];

function App() {
  return (
    <Desktop>
      <GlobalStyle />
      <Window>
        <TitleBar $active>
          <TitleIcon viewBox="0 0 13 14">
            <path d="M4 2h9v11H4z" fill="#c8d4ee" />
            <path d="M4 8h9M8 2v11" stroke="#8aa0d0" />
            <circle cx="1" cy="9" r="3" fill="#e8f0ff" stroke="#5a86d0" />
          </TitleIcon>
          <Title>ES ##-## (15 Min)  12/17/2012</Title>
          <Controls />
        </TitleBar>
        <Work>
          <Palette aria-label="Drawing tools">
            {palette.map(([name, icon, rule]) => (
              <React.Fragment key={name}>
                <PaletteButton aria-label={name}>
                  <svg width="14" height="23" viewBox="0 0 14 23">{icon}</svg>
                </PaletteButton>
                {rule && <PaletteRule $wide={rule === "wide"} />}
              </React.Fragment>
            ))}
          </Palette>
          <div>
            <Toolbar>
              <Grip />
              <Rule $after={5} />
              <Picker $w={73}>
                <select aria-label="Instrument"><option>ES ##-##</option></select>
                {caret}
              </Picker>
              <Picker $w={48}>
                <select aria-label="Interval"><option>15 Min</option></select>
                {caret}
              </Picker>
              <Rule $after={2} />
              <ToolButton $w={28} aria-label="Chart style">{candlesIcon}{caret}</ToolButton>
              <ToolButton $w={28} aria-label="Drawing tools">{pencilIcon}{caret}</ToolButton>
              <ToolButton aria-label="Zoom in"><Lens extra="+" /></ToolButton>
              <ToolButton $w={27} aria-label="Zoom out"><Lens extra="-" dull /></ToolButton>
              <Rule $after={3} />
              <ToolButton $w={26} aria-label="Cursor">{arrowIcon}{caret}</ToolButton>
              <ToolButton $on aria-label="Data box">
                <svg width="16" height="18" viewBox="0 0 16 18">
                  <rect x=".5" y=".5" width="15" height="16" fill="#fff" stroke="#888" />
                  <path d="M3 14l4-4" stroke="#666" strokeWidth="2" />
                  <circle cx="8.5" cy="8" r="4" fill="#6fb7e8" stroke="#a8b4bc" />
                </svg>
              </ToolButton>
              <Rule $before={4} />
              <ToolButton aria-label="Chart trader">{depthIcon}</ToolButton>
              <ToolButton aria-label="Data series">{boxedCandles}</ToolButton>
              <ToolButton aria-label="Indicators">{lineIcon}</ToolButton>
              <ToolButton aria-label="Strategies">{dollarIcon}</ToolButton>
              <ToolButton aria-label="Properties">{panelIcon}</ToolButton>
              <Rule $before={4} />
              {textTools.map(([t, w], i) => (
                <ToolButton key={i} $w={w}>{t}</ToolButton>
              ))}
            </Toolbar>
            <MainChart />
          </div>
        </Work>
      </Window>
      <SideWindow>
        <SideInner>
          <TitleBar>
            <Title />
            <Controls />
          </TitleBar>
          <Toolbar />
          <ProfileChart />
          <ScrollBar $h={26}>
            <ScrollPiece aria-label="Scroll thumb" />
            <ScrollPiece aria-label="Scroll right">
              <svg width="5" height="8"><path d="M0 0v8l4-4z" /></svg>
            </ScrollPiece>
          </ScrollBar>
          <Edge />
          <ScrollBar $h={6}>
            <ScrollPiece $w={22} aria-label="Second scroll thumb" />
            <ScrollPiece $w={6} aria-label="Second scroll right" />
          </ScrollBar>
          <Edge />
          <ScrollBar $h={2} $last />
        </SideInner>
      </SideWindow>
    </Desktop>
  );
}

export default App;
